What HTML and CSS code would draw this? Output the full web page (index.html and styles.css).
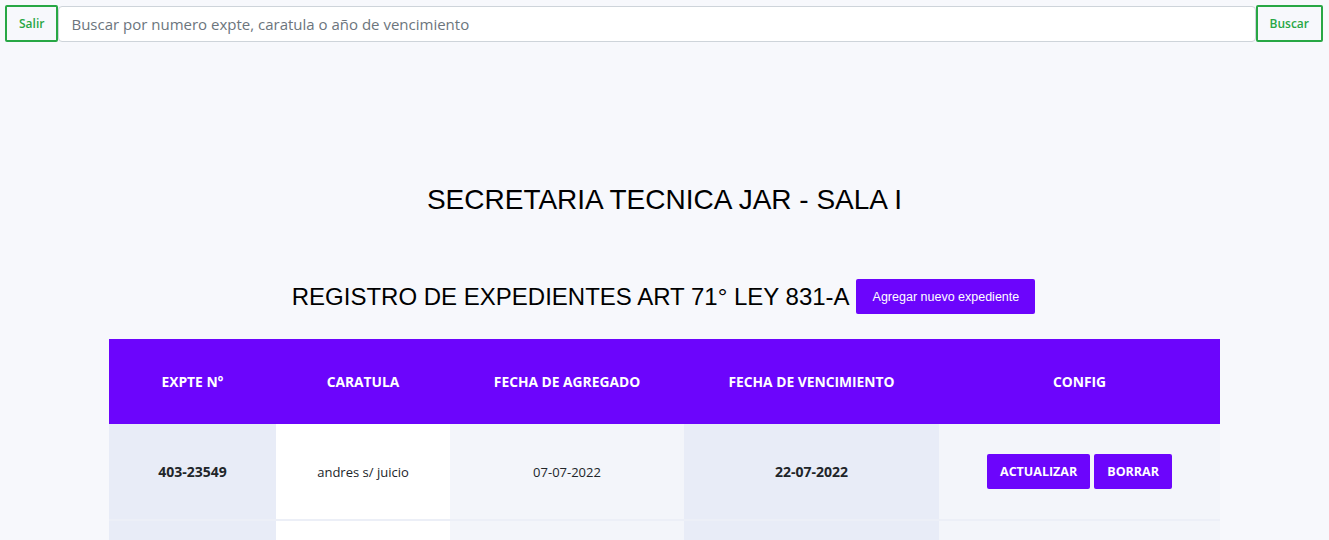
FILE: index.html
```html
<!DOCTYPE html>
<html lang="es">
<head>
<meta charset="utf-8">
<title>Secretaria Tecnica JAR</title>
<link rel="stylesheet" href="styles.css">
</head>
<body>
<nav class="topbar">
  <button class="btn-outline">Salir</button>
  <input class="search" type="text" placeholder="Buscar por numero expte, caratula o año de vencimiento">
  <button class="btn-outline">Buscar</button>
</nav>
<main>
  <h1 class="title">SECRETARIA TECNICA JAR - SALA I</h1>
  <div class="subtitle-row">
    <h2 class="subtitle">REGISTRO DE EXPEDIENTES ART 71° LEY 831-A</h2>
    <button class="btn-add">Agregar nuevo expediente</button>
  </div>
  <table class="records">
    <colgroup>
      <col class="c1"><col class="c2"><col class="c3"><col class="c4"><col class="c5">
    </colgroup>
    <thead>
      <tr>
        <th>EXPTE N°</th>
        <th>CARATULA</th>
        <th>FECHA DE AGREGADO</th>
        <th>FECHA DE VENCIMIENTO</th>
        <th>CONFIG</th>
      </tr>
    </thead>
    <tbody>
      <tr>
        <td class="bold dark">403-23549</td>
        <td class="white">andres s/ juicio</td>
        <td class="light">07-07-2022</td>
        <td class="bold dark">22-07-2022</td>
        <td class="light"><button class="btn-act">ACTUALIZAR</button><button class="btn-act">BORRAR</button></td>
      </tr>
      <tr>
        <td class="dark">&nbsp;</td>
        <td class="white">&nbsp;</td>
        <td class="light">&nbsp;</td>
        <td class="dark">&nbsp;</td>
        <td class="light">&nbsp;</td>
      </tr>
    </tbody>
  </table>
</main>
</body>
</html>
```
FILE: styles.css
```css
html, body {
  margin: 0;
  padding: 0;
  background: #f7f8fc;
  font-family: "Open Sans", "Noto Sans", sans-serif;
  color: #212529;
}
.topbar {
  display: flex;
  align-items: flex-start;
  padding: 5px 6px 0 5px;
}
.btn-outline {
  height: 37px;
  padding: 0 12px;
  border: 2px solid #28a745;
  border-radius: 2px;
  background: #f7f8fc;
  color: #28a745;
  font-family: "Open Sans", sans-serif;
  font-size: 12px;
  font-weight: 600;
  cursor: pointer;
}
.search {
  flex: 1;
  height: 36px;
  margin-top: 1px;
  box-sizing: border-box;
  border: 1px solid #ced4da;
  border-radius: 4px;
  padding: 0 12px;
  font-family: "Open Sans", sans-serif;
  font-size: 15px;
  color: #495057;
  background: #fff;
}
.search::placeholder { color: #6c757d; }
main {
  display: flex;
  flex-direction: column;
  align-items: center;
}
.title {
  margin: 142px 0 0;
  font-family: "Liberation Sans", Arial, sans-serif;
  font-weight: 400;
  font-size: 28px;
  line-height: 32px;
  color: #000;
}
.subtitle-row {
  display: flex;
  align-items: center;
  gap: 6px;
  margin-top: 63px;
  margin-right: 2px;
}
.subtitle {
  margin: 0;
  font-family: "Liberation Sans", Arial, sans-serif;
  font-weight: 400;
  font-size: 24px;
  line-height: 28px;
  color: #000;
}
.btn-add {
  height: 35px;
  padding: 0 16px 0 17px;
  border: none;
  border-radius: 2px;
  background: #6c05fc;
  color: #fff;
  font-family: "Liberation Sans", Arial, sans-serif;
  font-size: 12.5px;
}
.records {
  width: 1111px;
  margin-top: 25px;
  border-collapse: collapse;
  table-layout: fixed;
  font-size: 13px;
}
.c1 { width: 167px; }
.c2 { width: 174px; }
.c3 { width: 234px; }
.c4 { width: 255px; }
.c5 { width: 281px; }
.records th {
  height: 85px;
  padding: 0;
  background: #6c05fc;
  color: #fff;
  font-weight: 700;
  font-size: 13.8px;
  text-align: center;
}
.records td {
  height: 95px;
  padding: 0;
  text-align: center;
  border-bottom: 2px solid #eceff7;
}
.bold { font-weight: 700; font-size: 14px; }
.dark { background: #e8ecf7; }
.white { background: #fff; }
.light { background: #f3f5fa; }
.btn-act {
  height: 35px;
  padding: 0 13px;
  margin: 0 2px;
  border: none;
  border-radius: 2px;
  background: #6c05fc;
  color: #fff;
  font-family: "Open Sans", sans-serif;
  font-weight: 700;
  font-size: 12.5px;
}
```
